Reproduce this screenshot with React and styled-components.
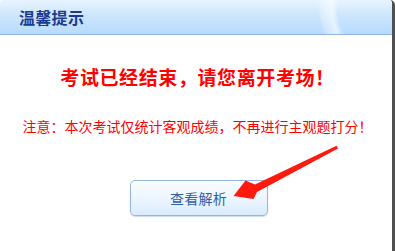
import React from "react";
import styled, { createGlobalStyle } from "styled-components";

const Global = createGlobalStyle`
  html, body { margin: 0; padding: 0; background: #fff; }
  body { font-family: "Noto Sans CJK SC", "Liberation Sans", sans-serif; }
`;

const Dialog = styled.div`
  position: relative;
  width: 395px;
  height: 251px;
  box-sizing: border-box;
  border-right: 3px solid #505050;
  border-top-right-radius: 5px;
  border-top-left-radius: 3px;
  background: #fff;
  overflow: hidden;
  display: flex;
  flex-direction: column;
`;

const Header = styled.div`
  height: 34px;
  border-bottom: 1px solid #8fb4e2;
  display: flex;
  align-items: center;
  padding-left: 19px;
  background:
    radial-gradient(ellipse 150px 95px at 470px 8px, rgba(255,255,255,0) 0, rgba(255,255,255,0) 88%, rgba(255,255,255,0.6) 92%, rgba(255,255,255,0.2) 100%, rgba(255,255,255,0) 101%),
    linear-gradient(180deg, #e7f4ff 0%, #cde6fd 45%, #b7dbfe 100%);
`;

const Title = styled.h1`
  margin: 0;
  font-size: 16px;
  font-weight: 700;
  color: #1d3b8c;
  line-height: 20px;
  letter-spacing: 0.3px;
`;

const Body = styled.div`
  display: flex;
  flex-direction: column;
  align-items: center;
  padding-left: 3px;
`;

const Heading = styled.div`
  margin-top: 30px;
  font-size: 19px;
  line-height: 24px;
  font-weight: 700;
  letter-spacing: 0.6px;
  color: #ff0000;
`;

const Note = styled.div`
  margin-top: 27px;
  font-size: 14px;
  line-height: 20px;
  color: #ff0000;
`;

const Button = styled.button`
  margin-top: 44px;
  margin-left: 2px;
  width: 138px;
  height: 36px;
  border: 1px solid #94b6dc;
  border-radius: 5px;
  background: linear-gradient(180deg, #f9fcff 0%, #eef6fe 50%, #d9ebfd 100%);
  box-shadow: 0 1px 1px rgba(120, 150, 190, 0.35);
  color: #2c5fa6;
  font-family: inherit;
  font-size: 14px;
  padding: 0;
  letter-spacing: 0.3px;
  cursor: pointer;
`;

const Arrow = styled.svg`
  position: absolute;
  left: 0;
  top: 0;
  pointer-events: none;
`;

export default function App() {
  return (
    <>
      <Global />
      <Dialog>
        <Header>
          <Title>温馨提示</Title>
        </Header>
        <Body>
          <Heading>考试已经结束，请您离开考场！</Heading>
          <Note>注意：本次考试仅统计客观成绩，不再进行主观题打分！</Note>
          <Button>查看解析</Button>
        </Body>
        <Arrow width="395" height="251" viewBox="0 0 395 251">
          <polygon
            points="336.5,145.8 338,148.4 257,192 253.5,199 233.5,196 245.5,180.5 255,184.5"
            fill="#ff1a10"
          />
        </Arrow>
      </Dialog>
    </>
  );
}
